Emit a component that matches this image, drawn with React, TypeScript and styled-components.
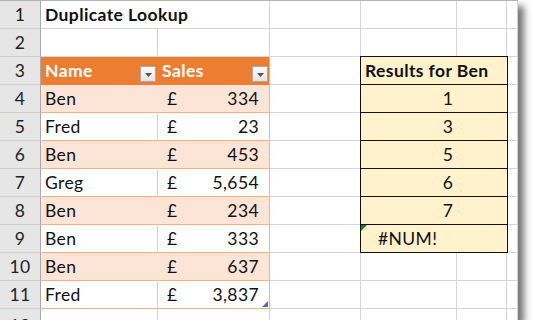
import styled, { createGlobalStyle, css } from "styled-components";

const GlobalStyle = createGlobalStyle`
  html, body {
    margin: 0;
    padding: 0;
    background: #ffffff;
  }
  body {
    font-family: "Lato", "Liberation Sans", sans-serif;
  }
`;

const GRID_LINE = "#d4d4d4";
const ORANGE = "#ed7d31";
const ORANGE_LINE = "#f4b084";
const BAND = "#fce4d6";
const RESULT_FILL = "#fff2cc";

const Sheet = styled.div`
  display: grid;
  grid-template-columns: 41px 117px 112px 91px 96px 50px 11px;
  grid-template-rows: repeat(11, 28px) 12px;
  width: 518px;
  height: 320px;
  overflow: hidden;
  background: #ffffff;
  border-top: 1px solid #b4b4b4;
  box-sizing: border-box;
  box-shadow: 6px 6px 7px rgba(0, 0, 0, 0.55);
  font-size: 17.5px;
  letter-spacing: 0.4px;
  color: #111;
`;

const RowHead = styled.div<{ $partial?: boolean }>`
  display: flex;
  align-items: ${(p) => (p.$partial ? "flex-start" : "flex-end")};
  justify-content: center;
  padding: ${(p) => (p.$partial ? "7px 0 0" : "0 0 3px")};
  overflow: hidden;
  box-sizing: border-box;
  background: #e6e6e6;
  border-right: 1px solid #a8a8a8;
  border-bottom: 1px solid #cdcdcd;
  color: #222;
  line-height: 20px;
`;

const Cell = styled.div<{ $span?: number; $bold?: boolean }>`
  display: flex;
  align-items: flex-end;
  padding: 0 4px 3px;
  box-sizing: border-box;
  line-height: 20px;
  white-space: nowrap;
  border-right: 1px solid ${GRID_LINE};
  border-bottom: 1px solid ${GRID_LINE};
  ${(p) => p.$span && css`grid-column: span ${p.$span};`}
  ${(p) => p.$bold && css`font-weight: 700;`}
`;

const TableHead = styled.div<{ $last?: boolean }>`
  display: flex;
  align-items: flex-end;
  justify-content: space-between;
  padding: 0 1px 2px 4px;
  box-sizing: border-box;
  background: ${ORANGE};
  color: #ffffff;
  font-weight: 700;
  line-height: 20px;
  border-right: 1px solid ${(p) => (p.$last ? ORANGE_LINE : ORANGE)};
  border-bottom: 1px solid ${ORANGE};
`;

const HeadLabel = styled.span`
  padding-bottom: 1px;
`;

const FilterButton = styled.span`
  display: flex;
  align-items: center;
  justify-content: center;
  width: 16px;
  height: 16px;
  box-sizing: border-box;
  background: linear-gradient(#fbfbfb, #e4e4e4);
  border: 1px solid #a9a9a9;
  padding-top: 2px;
`;

const TableCell = styled.div<{ $band: boolean; $last?: boolean; $money?: boolean }>`
  position: relative;
  display: flex;
  align-items: flex-end;
  justify-content: ${(p) => (p.$money ? "space-between" : "flex-start")};
  padding: ${(p) => (p.$money ? "0 10px 3px 9px" : "0 4px 3px")};
  box-sizing: border-box;
  line-height: 20px;
  background: ${(p) => (p.$band ? BAND : "#ffffff")};
  border-bottom: 1px solid ${ORANGE_LINE};
  border-right: 1px solid
    ${(p) => (p.$last ? ORANGE_LINE : p.$band ? BAND : GRID_LINE)};
`;

const ResizeHandle = styled.span`
  position: absolute;
  right: 1px;
  bottom: 1px;
  width: 0;
  height: 0;
  border-left: 6px solid transparent;
  border-bottom: 6px solid #5566c4;
`;

const ResultCell = styled.div<{ $head?: boolean; $error?: boolean }>`
  position: relative;
  grid-column: span 2;
  display: flex;
  align-items: flex-end;
  justify-content: ${(p) => (p.$head || p.$error ? "flex-start" : "center")};
  padding: ${(p) => (p.$head ? "0 4px 3px" : p.$error ? "0 4px 3px 17px" : "0 0 3px 28px")};
  box-sizing: border-box;
  line-height: 20px;
  background: ${RESULT_FILL};
  font-weight: ${(p) => (p.$head ? 700 : 400)};
  border-left: 1px solid #111;
  border-right: 1px solid #111;
  border-top: ${(p) => (p.$head ? "1px solid #111" : "none")};
  border-bottom: 1px solid #111;
  margin: ${(p) => (p.$head ? "-1px -1px 0 -1px" : "0 -1px 0 -1px")};
  ${(p) =>
    p.$error &&
    css`
      &::before {
        content: "";
        position: absolute;
        left: 0;
        top: 0;
        border-top: 6px solid #1e7b34;
        border-right: 6px solid transparent;
      }
    `}
`;

const Arrow = () => (
  <svg width="7" height="4" viewBox="0 0 7 4">
    <path d="M0 0 H7 L3.5 4 Z" fill="#555" />
  </svg>
);

interface Sale {
  name: string;
  amount: string;
}

const sales: Sale[] = [
  { name: "Ben", amount: "334" },
  { name: "Fred", amount: "23" },
  { name: "Ben", amount: "453" },
  { name: "Greg", amount: "5,654" },
  { name: "Ben", amount: "234" },
  { name: "Ben", amount: "333" },
  { name: "Ben", amount: "637" },
  { name: "Fred", amount: "3,837" },
];

const results = ["1", "3", "5", "6", "7", "#NUM!"];

const Blank = ({ n }: { n: number }) => (
  <>
    {Array.from({ length: n }).map((_, i) => (
      <Cell key={i} />
    ))}
  </>
);

export default function App() {
  return (
    <>
      <GlobalStyle />
      <Sheet>
        <RowHead>1</RowHead>
        <Cell $span={2} $bold>
          Duplicate Lookup
        </Cell>
        <Blank n={4} />

        <RowHead>2</RowHead>
        <Blank n={6} />

        <RowHead>3</RowHead>
        <TableHead>
          <HeadLabel>Name</HeadLabel>
          <FilterButton>
            <Arrow />
          </FilterButton>
        </TableHead>
        <TableHead $last>
          <HeadLabel>Sales</HeadLabel>
          <FilterButton>
            <Arrow />
          </FilterButton>
        </TableHead>
        <Cell />
        <ResultCell $head>Results for Ben</ResultCell>
        <Cell />

        {sales.map((s, i) => {
          const band = i % 2 === 0;
          const row = i + 4;
          const result = results[i];
          const isLast = i === sales.length - 1;
          return (
            <div key={row} style={{ display: "contents" }}>
              <RowHead>{row}</RowHead>
              <TableCell $band={band}>{s.name}</TableCell>
              <TableCell $band={band} $last $money>
                <span>£</span>
                <span>{s.amount}</span>
                {isLast && <ResizeHandle />}
              </TableCell>
              <Cell />
              {result !== undefined ? (
                <ResultCell $error={result.startsWith("#")}>{result}</ResultCell>
              ) : (
                <Blank n={2} />
              )}
              <Cell />
            </div>
          );
        })}

        <RowHead $partial>12</RowHead>
        <Blank n={6} />
      </Sheet>
    </>
  );
}
